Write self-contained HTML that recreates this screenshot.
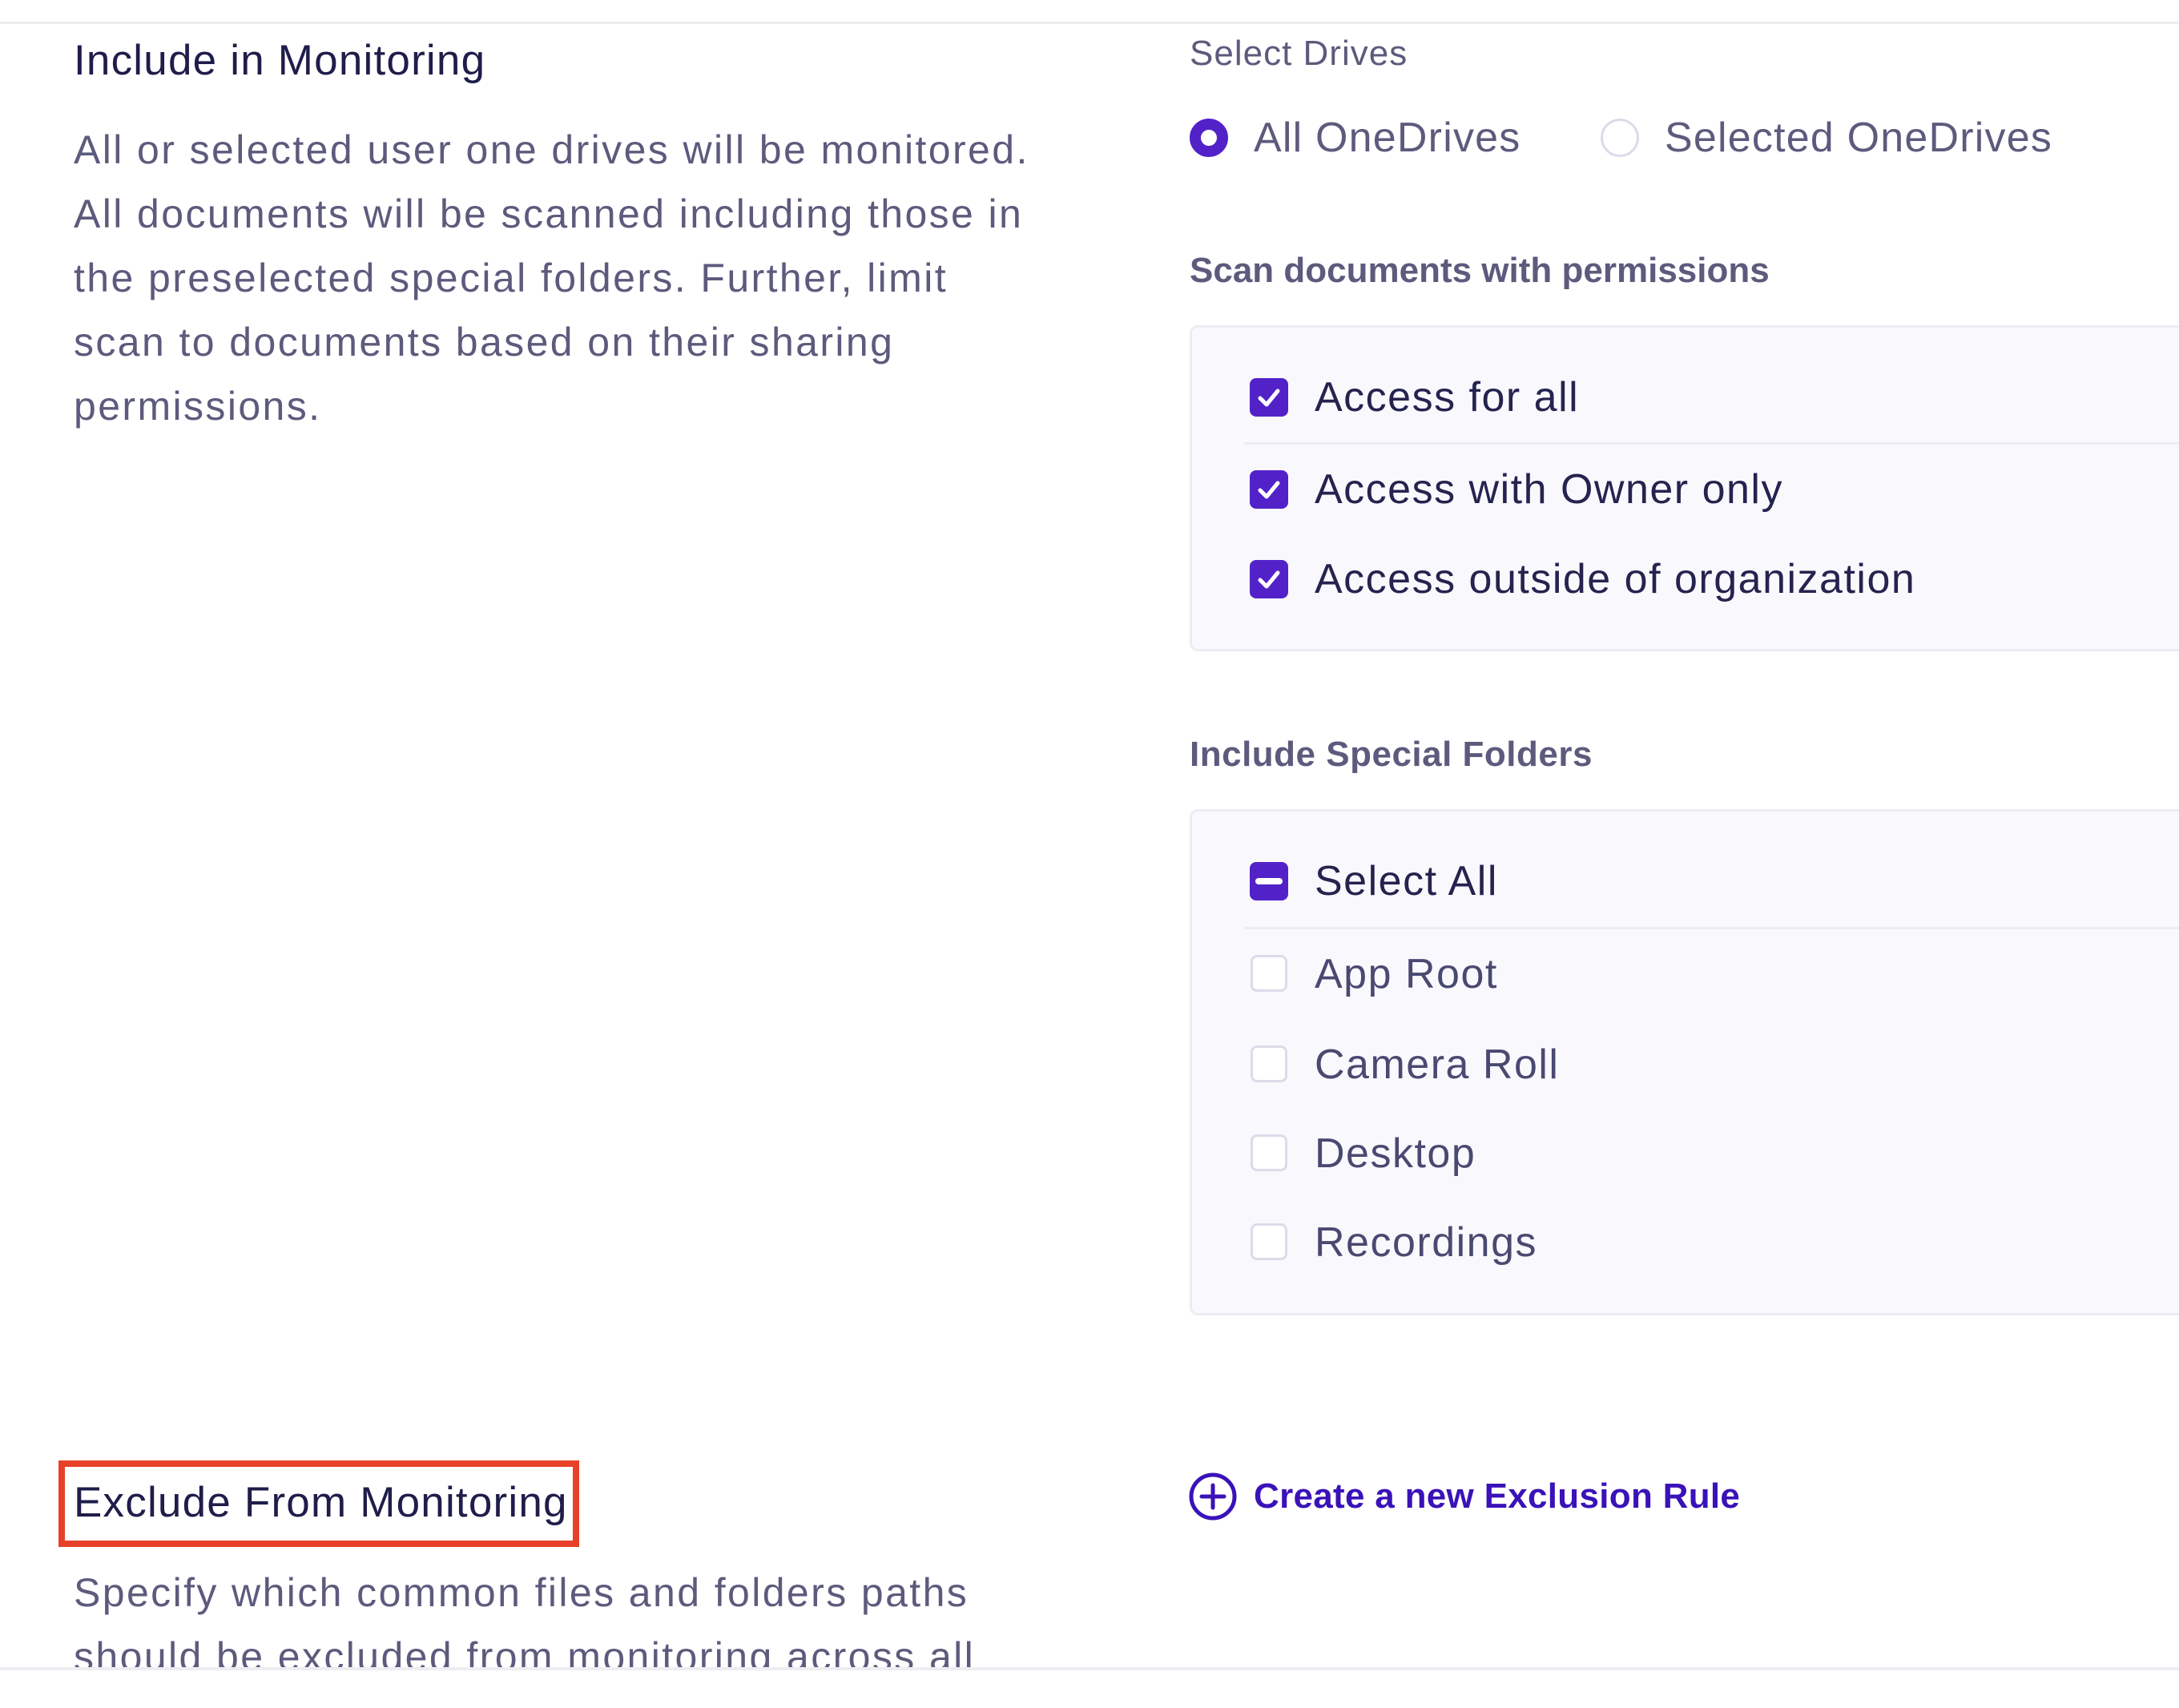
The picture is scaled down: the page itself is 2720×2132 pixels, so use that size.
<!DOCTYPE html>
<html><head><style>
*{margin:0;padding:0;box-sizing:border-box}
body{width:2720px;height:2132px;background:#fff;position:relative;overflow:hidden;font-family:"Liberation Sans",sans-serif}
.a{position:absolute;white-space:nowrap}
.t{color:#1f1d4a}
.p{color:#5c5b7d}
.box{position:absolute;left:1485px;width:1300px;background:#f9f9fd;border:3px solid #ececf3;border-radius:10px}
.cb{position:absolute;left:1560px;width:48px;height:48px;border-radius:8px;background:#5222c8}
.cbe{position:absolute;left:1561px;width:46px;height:46px;border-radius:8px;background:#fff;border:3px solid #dddbea}
.sep{position:absolute;left:1553px;width:1200px;height:3px;background:#ececf3}
.lbl{position:absolute;left:1641px;font-size:52px;letter-spacing:1.5px;line-height:60px;color:#25234f;white-space:nowrap}
.ti{font-size:53px;letter-spacing:1.2px;line-height:60px}
.pp{font-size:50px;letter-spacing:2.4px;line-height:80px}
</style></head><body>
<div style="position:absolute;left:0;top:27px;width:2720px;height:3px;background:#ededf2"></div>

<div class="a t ti" style="left:92px;top:46px">Include in Monitoring</div>
<div class="a p pp" style="left:92px;top:147px">All or selected user one drives will be monitored.<br>All documents will be scanned including those in<br>the preselected special folders. Further, limit<br>scan to documents based on their sharing<br>permissions.</div>

<div class="a p" style="left:1485px;top:42px;font-size:44px;letter-spacing:1px;line-height:50px">Select Drives</div>
<div style="position:absolute;left:1485px;top:148px;width:48px;height:48px;border-radius:50%;border:14px solid #5222c8;background:#fff"></div>
<div class="a p" style="left:1565px;top:142px;font-size:52px;letter-spacing:1.2px;line-height:60px">All OneDrives</div>
<div style="position:absolute;left:1998px;top:148px;width:48px;height:48px;border-radius:50%;border:3px solid #dddbea;background:#fff"></div>
<div class="a p" style="left:2078px;top:142px;font-size:52px;letter-spacing:1.2px;line-height:60px">Selected OneDrives</div>

<div class="a p" style="left:1485px;top:313px;font-size:44px;line-height:50px;font-weight:bold">Scan documents with permissions</div>
<div class="box" style="top:406px;height:407px"></div>
<svg width="0" height="0" style="position:absolute"><defs><path id="ck" d="M13 25 L21 33 L35 16" fill="none" stroke="#fff" stroke-width="5" stroke-linecap="round" stroke-linejoin="round"/></defs></svg>
<div class="cb" style="top:472px"><svg width="48" height="48"><use href="#ck"/></svg></div>
<div class="lbl" style="top:466px">Access for all</div>
<div class="sep" style="top:552px"></div>
<div class="cb" style="top:587px"><svg width="48" height="48"><use href="#ck"/></svg></div>
<div class="lbl" style="top:581px">Access with Owner only</div>
<div class="cb" style="top:699px"><svg width="48" height="48"><use href="#ck"/></svg></div>
<div class="lbl" style="top:693px">Access outside of organization</div>

<div class="a p" style="left:1485px;top:917px;font-size:44px;letter-spacing:0.5px;line-height:50px;font-weight:bold">Include Special Folders</div>
<div class="box" style="top:1010px;height:632px"></div>
<div class="cb" style="top:1076px"><div style="position:absolute;left:7px;top:20px;width:34px;height:8px;border-radius:4px;background:#fff"></div></div>
<div class="lbl" style="top:1070px">Select All</div>
<div class="sep" style="top:1157px"></div>
<div class="cbe" style="top:1192px"></div>
<div class="lbl" style="top:1186px;color:#4a4972">App Root</div>
<div class="cbe" style="top:1305px"></div>
<div class="lbl" style="top:1299px;color:#4a4972">Camera Roll</div>
<div class="cbe" style="top:1416px"></div>
<div class="lbl" style="top:1410px;color:#4a4972">Desktop</div>
<div class="cbe" style="top:1527px"></div>
<div class="lbl" style="top:1521px;color:#4a4972">Recordings</div>

<div style="position:absolute;left:73px;top:1823px;width:650px;height:108px;border:8px solid #e8412a"></div>
<div class="a t ti" style="left:92px;top:1846px">Exclude From Monitoring</div>
<div class="a p pp" style="left:92px;top:1948px">Specify which common files and folders paths<br>should be excluded from monitoring across all</div>
<div style="position:absolute;left:0;top:2081px;width:2720px;height:51px;background:#fff;border-top:4px solid #ededf2"></div>

<svg class="a" style="left:1483px;top:1837px" width="62" height="62" viewBox="0 0 62 62"><circle cx="31" cy="31" r="27" fill="none" stroke="#3a12b8" stroke-width="5"/><path d="M31 17V45M17 31H45" stroke="#3a12b8" stroke-width="5" stroke-linecap="round"/></svg>
<div class="a" style="left:1565px;top:1843px;font-size:44px;letter-spacing:0.3px;line-height:50px;font-weight:bold;color:#3a12b8">Create a new Exclusion Rule</div>
</body></html>
